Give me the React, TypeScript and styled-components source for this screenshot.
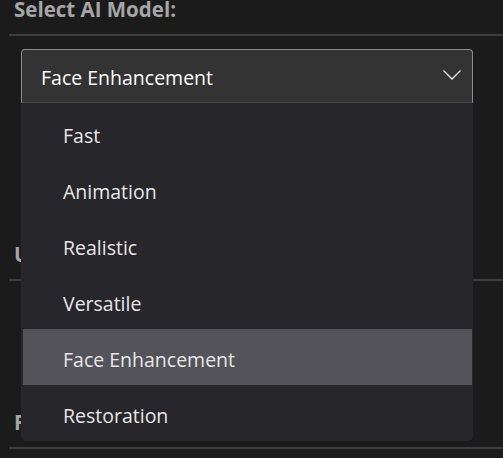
import React from "react";
import styled, { createGlobalStyle } from "styled-components";

const Global = createGlobalStyle`
  html, body { margin: 0; padding: 0; background: #1b1b1b; }
  body { font-family: "Open Sans", "Noto Sans", sans-serif; overflow: hidden; }
`;

const Page = styled.div`
  position: relative;
  width: 503px;
  height: 458px;
  padding-left: 9px;
  box-sizing: border-box;
  overflow: hidden;
`;

const Section = styled.section<{ $gap: number }>`
  display: flex;
  flex-direction: column;
  margin-top: ${(p) => p.$gap}px;
`;

const Heading = styled.h2`
  margin: 0;
  padding-left: 5px;
  font-size: 20.5px;
  line-height: 18px;
  height: 18px;
  font-weight: 700;
  color: #a6a6a6;
  white-space: nowrap;
`;

const Divider = styled.div`
  height: 2px;
  background: #3c3c3c;
  margin-top: 16px;
`;

const SelectWrap = styled.div`
  position: relative;
  margin: 13px 0 0 12px;
  width: 452px;
`;

const SelectBox = styled.div`
  box-sizing: border-box;
  height: 54px;
  display: flex;
  align-items: center;
  justify-content: space-between;
  padding: 3px 11px 0 19px;
  background: #333333;
  border: 1px solid #8c8c8c;
  border-bottom-color: #4a4a4a;
  border-radius: 4px 4px 0 0;
  color: #ffffff;
  font-size: 19.5px;
`;

const ChevronBox = styled.span`
  display: flex;
  margin-bottom: 5px;
`;

const Menu = styled.ul`
  position: absolute;
  left: 0;
  top: 54px;
  width: 452px;
  box-sizing: border-box;
  margin: 0;
  padding: 2px 1px 0 2px;
  list-style: none;
  background: #27272b;
  border-radius: 0 0 5px 5px;
  z-index: 2;
`;

const Item = styled.li<{ $active?: boolean }>`
  box-sizing: border-box;
  height: 56px;
  display: flex;
  align-items: center;
  padding: 4px 0 0 40px;
  font-size: 19.5px;
  color: #e6e6e6;
  background: ${(p) => (p.$active ? "#545359" : "transparent")};
`;

const Chevron = () => (
  <ChevronBox>
    <svg width="18" height="10" viewBox="0 0 18 10" fill="none">
      <path d="M0.5 0.5 L9 9 L17.5 0.5" stroke="#f0f0f0" strokeWidth="1.3" />
    </svg>
  </ChevronBox>
);

const models = ["Fast", "Animation", "Realistic", "Versatile", "Face Enhancement", "Restoration"];

export default function App() {
  return (
    <>
      <Global />
      <Page>
        <Section $gap={0}>
          <Heading>Select AI Model:</Heading>
          <Divider />
          <SelectWrap>
            <SelectBox>
              <span>Face Enhancement</span>
              <Chevron />
            </SelectBox>
            <Menu>
              {models.map((m) => (
                <Item key={m} $active={m === "Face Enhancement"}>
                  {m}
                </Item>
              ))}
            </Menu>
          </SelectWrap>
        </Section>
        <Section $gap={209 - 67}>
          <Heading>Upscale:</Heading>
          <Divider />
        </Section>
        <Section $gap={132}>
          <Heading>Format:</Heading>
          <Divider />
        </Section>
      </Page>
    </>
  );
}
